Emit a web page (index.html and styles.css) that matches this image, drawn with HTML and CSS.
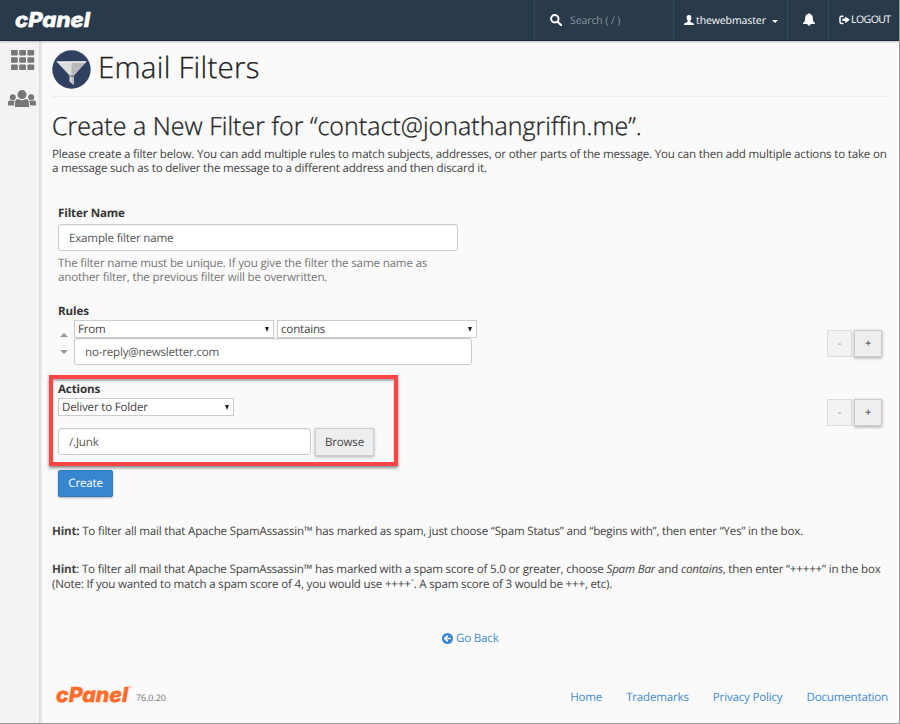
FILE: index.html
```html
<!DOCTYPE html>
<html lang="en">
<head>
<meta charset="utf-8">
<title>cPanel - Email Filters</title>
<link rel="stylesheet" href="styles.css">
</head>
<body>
<div class="app">
  <header class="topbar">
    <svg class="brand" width="84" height="30" viewBox="0 -4 84 30"><text x="1" y="18" textLength="75" lengthAdjust="spacingAndGlyphs">cPanel</text></svg>
    <div class="search">
      <svg width="12" height="12" viewBox="0 0 12 12"><circle cx="4.8" cy="4.8" r="3.7" fill="none" stroke="#fff" stroke-width="2"/><path d="M7.7 7.7 11 11" stroke="#fff" stroke-width="2.2" stroke-linecap="round"/></svg>
      <span>Search ( / )</span>
    </div>
    <div class="user">
      <svg width="10" height="10" viewBox="0 0 10 10"><path fill="#fff" d="M5 0C3.300 0 2.500 1.200 2.600 3 2.700 4.400 3.200 5.200 3.800 5.700 3.900 6.900 3.200 7.200 1.800 7.800.6 8.300 0 8.700 0 10H10C10 8.700 9.400 8.300 8.200 7.800 6.800 7.200 6.100 6.900 6.200 5.700 6.800 5.200 7.300 4.400 7.400 3 7.500 1.200 6.700 0 5 0Z"/></svg>
      <span class="username">thewebmaster</span>
      <i class="caret"></i>
    </div>
    <div class="bell">
      <svg width="12" height="13" viewBox="0 0 12 13"><path fill="#fff" d="M5.100 1.100C5.100-.2 6.900-.2 6.900 1.100 9 1.600 9.800 3.100 9.800 5 9.800 7.800 10.600 9 12 10V11H0V10C1.400 9 2.200 7.800 2.200 5 2.200 3.100 3 1.600 5.100 1.100ZM4.400 11H7.600C7.400 13.200 4.600 13.200 4.400 11Z"/></svg>
    </div>
    <div class="logout">
      <svg width="11" height="10" viewBox="0 0 11 10"><path d="M4.500 1.200H2.600Q1 1.200 1 2.800V6.800Q1 8.400 2.600 8.400H4.500" fill="none" stroke="#fff" stroke-width="1.500"/><path fill="#fff" d="M3.400 3.600H6.300V1.400L10.800 4.800 6.300 8.200V6H3.400Z"/></svg>
      <span>LOGOUT</span>
    </div>
  </header>
  <div class="body">
    <nav class="sidebar">
      <svg width="24" height="20" viewBox="0 0 24 20" fill="#777"><rect width="6.800" height="5.600" rx="1"/><rect x="8.200" width="6.800" height="5.600" rx="1"/><rect x="16.400" width="6.800" height="5.600" rx="1"/><rect y="7.200" width="6.800" height="5.600" rx="1"/><rect x="8.200" y="7.200" width="6.800" height="5.600" rx="1"/><rect x="16.400" y="7.200" width="6.800" height="5.600" rx="1"/><rect y="14.400" width="6.800" height="5.600" rx="1"/><rect x="8.200" y="14.400" width="6.800" height="5.600" rx="1"/><rect x="16.400" y="14.400" width="6.800" height="5.600" rx="1"/></svg>
      <svg class="people" width="28" height="18" viewBox="0 0 28 18" fill="#777"><circle cx="14" cy="4.600" r="4.500"/><path d="M7 17V13.500Q7 9 10.300 9 14 11.500 17.700 9 21 9 21 13.500V17Z"/><circle cx="4.800" cy="7.200" r="3"/><circle cx="23.200" cy="7.200" r="3"/><path d="M0 15.500V13.500Q0 10.300 2.500 10.300 4.500 11.300 6.900 10.500 6 12 6.100 15.500ZM28 15.500V13.500Q28 10.300 25.500 10.300 23.500 11.300 21.100 10.500 22 12 21.900 15.500Z"/></svg>
    </nav>
    <main class="main">
      <div class="title">
        <svg width="39" height="39" viewBox="0 0 39 39"><circle cx="19.500" cy="19.500" r="19.200" fill="#2f4060"/><path d="M4.500 11.500H34.500L21.800 25.500V35L17.500 31.500V25.500Z" fill="#dcdcdc"/><path d="M19.500 11.500H34.500L21.800 25.500V35L19.500 33Z" fill="#b8b8b8"/><path d="M4.500 11.500H34.500L33.300 12.800H5.700Z" fill="#f5f5f5"/><path d="M17.500 25.500H21.800V27L17.500 26.500Z" fill="#777"/></svg>
        <h1>Email Filters</h1>
      </div>
      <h2>Create a New Filter for “contact@jonathangriffin.me”.</h2>
      <p class="intro">Please create a filter below. You can add multiple rules to match subjects, addresses, or other parts of the message. You can then add multiple actions to take on<br>a message such as to deliver the message to a different address and then discard it.</p>
      <section class="field">
        <h3>Filter Name</h3>
        <div class="input name">Example filter name</div>
        <p class="help">The filter name must be unique. If you give the filter the same name as<br>another filter, the previous filter will be overwritten.</p>
      </section>
      <section class="rules">
        <h3>Rules</h3>
        <div class="row">
          <div class="sort"><i class="up"></i><i class="down"></i></div>
          <div class="rule">
            <div class="selects">
              <div class="select"><span>From</span><i></i></div>
              <div class="select"><span>contains</span><i></i></div>
            </div>
            <div class="input value">no-reply@newsletter.com</div>
          </div>
          <div class="pm"><span class="minus">-</span><span class="plus">+</span></div>
        </div>
      </section>
      <section class="actions">
        <div class="highlight">
          <h3>Actions</h3>
          <div class="select folder"><span>Deliver to Folder</span><i></i></div>
          <div class="path">
            <div class="input">/.Junk</div>
            <div class="browse"><span>Browse</span></div>
          </div>
        </div>
        <div class="pm"><span class="minus">-</span><span class="plus">+</span></div>
      </section>
      <div class="create"><span>Create</span></div>
      <p class="hint one"><b>Hint:</b> To filter all mail that Apache SpamAssassin™ has marked as spam, just choose “Spam Status” and “begins with”, then enter “Yes” in the box.</p>
      <p class="hint two"><b>Hint</b>: To filter all mail that Apache SpamAssassin™ has marked with a spam score of 5.0 or greater, choose <em>Spam Bar</em> and <em>contains</em>, then enter “+++++” in the box<br>(Note: If you wanted to match a spam score of 4, you would use ++++`. A spam score of 3 would be +++, etc).</p>
      <a class="back"><svg width="11" height="11" viewBox="0 0 11 11"><circle cx="5.500" cy="5.500" r="5.500" fill="#3686d0"/><path d="M5.700 2.700 2.800 5.500 5.700 8.300M3.200 5.500H8.700" stroke="#fff" stroke-width="1.600" fill="none"/></svg><span>Go Back</span></a>
      <footer>
        <svg class="brand orange" width="78" height="30" viewBox="0 -4 78 30"><text x="1" y="17" textLength="72" lengthAdjust="spacingAndGlyphs">cPanel</text><circle cx="75" cy="2" r=".9" fill="none" stroke="#ff6c2c" stroke-width=".4"/></svg>
        <span class="version">76.0.20</span>
        <div class="links"><a>Home</a><a>Trademarks</a><a>Privacy Policy</a><a>Documentation</a></div>
      </footer>
    </main>
  </div>
</div>
</body>
</html>
```
FILE: styles.css
```css
* { box-sizing: border-box; }
body { margin: 0; font: 11.6px/14px "Open Sans", sans-serif; letter-spacing: -.2px; color: #444; text-rendering: geometricPrecision; }
h1, h2, h3, p { margin: 0; }
svg { display: block; flex: none; }
p, span, a, h1, h2, h3 { white-space: nowrap; }
.app { width: 900px; height: 724px; background: #fafafa; border-right: 1px solid #999; border-bottom: 1px solid #999; display: flex; flex-direction: column; overflow: hidden; }
.topbar { height: 41px; flex: none; margin-right: -1px; background: #293a4a; border-bottom: 1px solid #1f2c3b; display: flex; color: #fff; font-size: 10.5px; letter-spacing: -.1px; box-shadow: 0 1px 2px rgba(0,0,0,.25); position: relative; }
.topbar > div { display: flex; align-items: center; border-left: 1px solid #34495a; height: 40px; flex: none; }
.brand { margin: 5px 0 0 14px; letter-spacing: 0; }
.brand text { font: italic 800 20.500px/1 Inter, sans-serif; fill: #fff; stroke: #fff; stroke-width: .5px; }
.topbar .search { margin-left: auto; width: 139px; padding-left: 15px; gap: 8px; color: #8b959e; }
.topbar .search span { padding-top: 1px; }
.topbar .user { width: 114px; padding-left: 10px; gap: 2px; }
.username { width: 66px; padding-top: 1px; }
.caret { border: 3px solid transparent; border-top-color: #fff; border-bottom: 0; margin: 3px 0 0 8px; flex: none; }
.topbar .bell { width: 41px; padding: 0 0 2px 15px; }
.topbar .logout { width: 72px; padding-left: 10px; gap: 1px; letter-spacing: -.55px; }
.body { flex: 1; display: flex; min-height: 0; }
.sidebar { width: 40px; flex: none; background: #f3f3f3; border-right: 1px solid #ddd; box-shadow: 1px 0 2px rgba(0,0,0,.15); padding: 9px 0 0 11px; }
.people { margin: 20px 0 0 -3px; }
.main { flex: 1; padding: 9px 11px 0 12px; display: flex; flex-direction: column; }
.title { height: 47px; flex: none; border-bottom: 1px solid #eee; display: flex; gap: 7px; }
h1, h2 { font-weight: 300; color: #222; -webkit-text-stroke: .3px #222; }
h1 { font-size: 29.500px; line-height: 34px; letter-spacing: .25px; }
h2 { margin-top: 12px; height: 34px; font-size: 25px; line-height: 34px; letter-spacing: .02px; }
h3 { font-size: 11.6px; line-height: 14px; font-weight: 700; letter-spacing: -.13px; color: #333; }
.intro { margin-top: 5px; height: 28px; }
.field { margin: 31px 0 0 6px; height: 78px; }
.input { background: #fff; border: 1px solid #ccc; border-radius: 3px; height: 27px; line-height: 27px; padding-left: 10px; color: #555; box-shadow: inset 0 1px 1px rgba(0,0,0,.06); }
.name { width: 400px; margin-top: 3px; }
.help { margin-top: 6px; letter-spacing: -.17px; color: #777; }
.rules { margin: 20px 0 0 6px; height: 61px; }
.row, .selects, .path, .actions { display: flex; }
.row { margin-top: 1px; }
.sort { width: 16px; padding: 13px 0 0 2px; }
.sort i { display: block; width: 8px; border: 4px solid transparent; }
.sort .up { border-bottom-color: #999; border-top: 0; }
.sort .down { border-top-color: #999; border-bottom: 0; margin-top: 13px; }
.selects { gap: 3px; }
.select { width: 200px; height: 18px; background: #fff; border: 1px solid #ccc; display: flex; align-items: center; justify-content: space-between; padding: 0 4px 0 3px; color: #444; }
.select span { padding-top: 2px; }
.select i { border: 2.500px solid transparent; border-top: 5px solid #222; border-bottom: 0; }
.value { width: 398px; }
.pm { margin: 10px 6px 0 auto; display: flex; gap: 2px; }
.pm span { width: 25px; height: 27px; border: 1px solid #ddd; background: #f2f2f2; line-height: 26px; text-align: center; font-size: 11px; color: #888; }
.pm .plus { width: 28px; border-color: #ccc; color: #333; box-shadow: 0 1px 3px rgba(0,0,0,.35); background: #eee; }
.actions { margin: 9px 0 0 -3px; height: 91px; flex: none; }
.highlight { width: 349px; height: 91px; border: 4px solid #fb4444; box-shadow: 0 2px 3px rgba(0,0,0,.45), inset 0 2px 2px rgba(0,0,0,.3); padding: 4px 0 0 5px; }
.folder { width: 176px; margin-top: 1px; }
.path { margin-top: 12px; gap: 4px; }
.path .input { width: 253px; }
.browse { width: 59px; height: 28px; border: 1px solid #ccc; background: #eee; text-align: center; line-height: 27px; box-shadow: 0 1px 3px rgba(0,0,0,.3); }
.actions .pm { margin-top: 24px; }
.create { margin: 4px 0 0 6px; width: 55px; height: 27px; flex: none; background: #3787d0; border: 1px solid #2f7bc0; border-radius: 2px; color: #fff; text-align: center; line-height: 26px; box-shadow: 0 1px 2px rgba(0,0,0,.3); }
.one { margin-top: 28px; }
.two { margin-top: 24px; line-height: 14.500px; }
.back { margin: 40px 0 0 390px; display: flex; align-items: center; gap: 3px; color: #428bca; }
.back svg { margin-bottom: 2px; }
footer { margin-top: 39px; display: flex; height: 24px; }
footer .brand { margin: -4px 0 0 3px; }
.brand.orange text { fill: #ff6c2c; stroke: #ff6c2c; }
.version { margin: 6px 0 0 3px; font-size: 9px; letter-spacing: -.1px; color: #777; }
.links { margin-left: auto; display: flex; gap: 24px; color: #428bca; padding-top: 6px; }
```
